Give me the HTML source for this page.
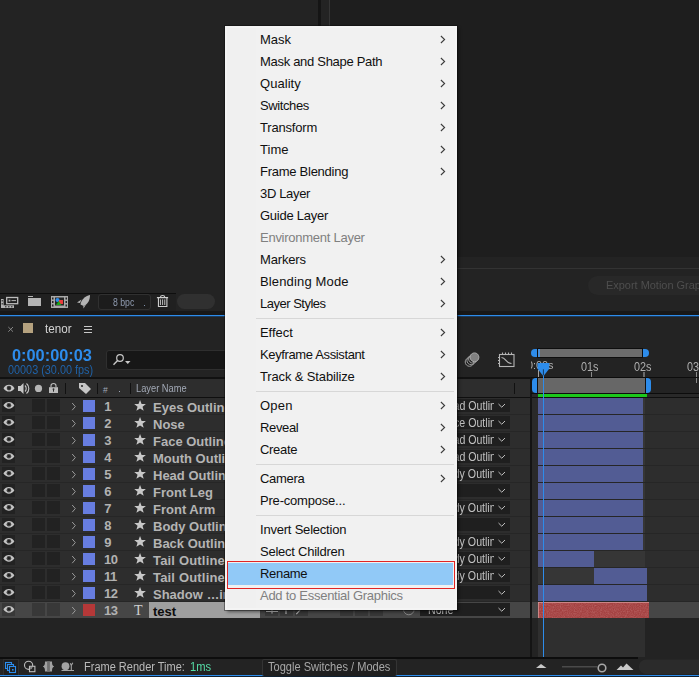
<!DOCTYPE html>
<html><head><meta charset="utf-8"><title>AE</title>
<style>
*{box-sizing:border-box;margin:0;padding:0}
html,body{width:699px;height:679px;overflow:hidden;background:#232323;font-family:"Liberation Sans",sans-serif;}
body{position:relative}
.a{position:absolute}
.t{position:absolute;white-space:nowrap;line-height:1}
/* menu */
#menu{position:absolute;left:225px;top:26px;width:232px;height:584px;background:#f1f1f1;border:2px solid #f4f4f4;box-shadow:0 0 0 1px rgba(10,10,10,.4),2px 2px 3px rgba(0,0,0,.45)}
#menu .gut{position:absolute;left:0;top:0;width:29px;height:100%;background:#f0f0f0}
.mi{position:absolute;left:1px;width:225px;height:22px;font-size:13px;line-height:24px;color:#101010;letter-spacing:-0.36px;padding-left:32px;white-space:nowrap}
.mi.dis{color:#808080}
.hlbg{position:absolute;left:1px;width:225px;height:22px;background:#91c9f7}
.mi svg{position:absolute;left:212px;top:7px}
.sep{position:absolute;left:29px;width:198px;height:1px;background:#d7d7d7}
/* rows */
.row{position:absolute;left:0;width:699px;height:17px;background:#2d2d2d;border-bottom:1px solid #262626}
.row.sel{background:#464646;border-bottom-color:#464646;height:16px}
.bx{position:absolute;top:1px;height:13px;background:#222}
.sel .bx{background:#383838}
.num{position:absolute;top:2px;font-size:13px;font-weight:bold;color:#b2b2b2;line-height:13px;letter-spacing:-0.6px}
.nm{position:absolute;left:153px;top:3px;font-size:13px;font-weight:bold;color:#b4b4b4;line-height:13px;white-space:nowrap}
.dd{position:absolute;left:420px;top:1px;width:90px;height:13px;background:#1f1f1f}
.dd .cl{position:absolute;left:0;top:0;width:74.2px;height:15px;overflow:hidden}
.dd span{position:absolute;right:-1.5px;top:0.8px;font-size:12.5px;line-height:13px;color:#c2c2c2;white-space:nowrap;transform:scaleX(0.85);transform-origin:100% 0}
.dd svg{position:absolute;left:78px;top:4px}
</style></head><body>

<div class="a" style="left:330px;top:0;width:369px;height:257px;background:#1e1e1e"></div>
<div class="a" style="left:318px;top:0;width:3px;height:311px;background:#151515"></div>
<div class="a" style="left:329px;top:0;width:1px;height:311px;background:#353535"></div>
<div class="a" style="left:330px;top:268px;width:369px;height:1px;background:#333"></div>
<div class="a" style="left:588px;top:276px;width:140px;height:19px;border-radius:10px;background:#282828"></div>
<div class="t" style="left:606px;top:280.3px;font-size:11.5px;color:#4e4e4e;transform:scaleX(0.951);transform-origin:0 0;">Export Motion Graphics Template</div>
<div class="a" style="left:0;top:294px;width:176px;height:17px;background:#202020"></div>
<div class="a" style="left:0;top:293px;width:176px;height:1px;background:#0e0e0e"></div>
<div class="a" style="left:0;top:311px;width:699px;height:4px;background:#181818"></div>
<div class="a" style="left:0;top:315px;width:699px;height:1px;background:#2d8ceb"></div>
<div class="a" style="left:0;top:316px;width:699px;height:1px;background:#1c3a5a"></div>
<svg class="a" style="left:0;top:294px" width="220" height="17" viewBox="0 294 220 17">
<g fill="#b4b4b4">
<rect x="1" y="299" width="2.6" height="9"/><rect x="3" y="305.3" width="11" height="2.7"/>
<rect x="6.700" y="297.500" width="11" height="6.200" fill="none" stroke="#bcbcbc" stroke-width="1.300"/>
<rect x="8.600" y="299.700" width="1.800" height="1.800"/><rect x="11.500" y="300.100" width="4.500" height="1"/>
<g fill="#202020"><rect x="1.700" y="300" width="1" height="1.500"/><rect x="1.700" y="303" width="1" height="1.500"/><rect x="5" y="306.300" width="1.500" height="1"/><rect x="8" y="306.300" width="1.500" height="1"/><rect x="11" y="306.300" width="1.500" height="1"/></g>
<rect x="28" y="296" width="5" height="1"/><rect x="28" y="298" width="13" height="8"/>
</g>
<g>
<rect x="51" y="296" width="17" height="12" fill="#a9a9a9"/>
<rect x="55" y="297.5" width="9" height="8" fill="#252525"/>
<circle cx="57.5" cy="300" r="2" fill="#2d8ceb"/><rect x="59" y="300" width="4" height="4" fill="#e83c3c"/><path d="M56 305 L58.7 301 L61.4 305Z" fill="#18a818"/>
<g fill="#252525"><rect x="52" y="297.5" width="1.5" height="2"/><rect x="52" y="301" width="1.5" height="2"/><rect x="52" y="304.5" width="1.5" height="2"/><rect x="65.5" y="297.5" width="1.5" height="2"/><rect x="65.5" y="301" width="1.5" height="2"/><rect x="65.5" y="304.5" width="1.5" height="2"/></g>
</g>
<g fill="#b4b4b4">
<path d="M90 295 C85 296 81 300 80.5 304.5 L83.5 306 C88 304 90 300 90 295Z"/>
<path d="M81.5 299.5 L77 302.5 L80 303Z"/>
<path d="M86 304.5 L83.5 308.5 L83.3 306.3Z"/>
</g>
<rect x="98.5" y="294.5" width="52" height="15" rx="2.5" fill="#1c1c1c" stroke="#303030"/>
<rect x="144" y="305" width="1" height="1" fill="#7d8ea8"/>
<g fill="none" stroke="#cdcdcd" stroke-width="1.100">
<path d="M156.900 297.600 H168.100 M160.400 297.200 C160.600 294.900 164.600 294.900 164.800 297.200 M158.450 298 V306.450 H166.900 V298"/>
<path d="M160.450 299.400 V305 M162.600 299.400 V305 M164.750 299.400 V305" stroke-width="0.9"/>
</g>
<rect x="177" y="294" width="38" height="15" rx="7.5" fill="#303030"/>
</svg>
<div class="t" style="left:113px;top:297px;font-size:11px;color:#8f9bb0;transform:scaleX(0.79);transform-origin:0 0;">8 bpc</div>
<svg class="a" style="left:0;top:320px" width="100" height="18" viewBox="0 320 100 18">
<path d="M8.3 327 L13 331.700 M13 327 L8.3 331.700" stroke="#909090" stroke-width="0.9" fill="none"/>
<rect x="23" y="323" width="10" height="10" fill="#b5a27f"/>
<g fill="#c8c8c8"><rect x="84" y="326" width="8" height="1"/><rect x="84" y="329" width="8" height="1"/><rect x="84" y="332" width="8" height="1"/></g>
</svg>
<div class="t" style="left:45px;top:322.5px;font-size:12.5px;color:#d4d4d4;transform:scaleX(0.93);transform-origin:0 0;">tenor</div>
<div class="t" style="left:12px;top:346.5px;font-size:16.5px;color:#2d8ceb;transform:scaleX(0.99);transform-origin:0 0;font-weight:bold">0:00:00:03</div>
<div class="t" style="left:8px;top:364px;font-size:12px;color:#1f62a8;transform:scaleX(0.905);transform-origin:0 0;">00003 (30.00 fps)</div>
<div class="a" style="left:106px;top:350px;width:200px;height:20px;border:1px solid #2f2f2f;border-radius:3px;background:#171717"></div>
<svg class="a" style="left:110px;top:352px" width="24" height="16" viewBox="110 352 24 16">
<circle cx="120" cy="358" r="3.3" fill="none" stroke="#c8c8c8" stroke-width="1.2"/><path d="M117.6 360.6 L113.5 364.8" stroke="#c8c8c8" stroke-width="1.4"/>
<path d="M125 361 H130.5 L127.75 364Z" fill="#c8c8c8"/></svg>
<svg class="a" style="left:460px;top:348px" width="60" height="24" viewBox="460 348 60 24">
<g fill="none" stroke="#9a9a9a" stroke-width="1">
<circle cx="469.5" cy="362" r="4.3"/><circle cx="471.2" cy="360.4" r="4.3"/><circle cx="472.9" cy="358.8" r="4.3"/>
</g><circle cx="474.5" cy="357.3" r="4.4" fill="#808080" stroke="#a8a8a8" stroke-width="1"/>
<g fill="none" stroke="#b4b4b4" stroke-width="1.1">
<rect x="499.5" y="354.5" width="14.5" height="12"/>
<path d="M501.5 357.5 C506 357.5 506 363.5 511.5 363.5"/>
<path d="M502.5 352.5 V354 M505.5 352.5 V354 M508.5 352.5 V354 M511.5 352.5 V354 M498 357.5 H499.5 M498 360.5 H499.5 M498 363.5 H499.5"/>
</g></svg>
<div class="a" style="left:0;top:377px;width:531px;height:2px;background:#111"></div>
<div class="a" style="left:0;top:379px;width:530px;height:18px;background:#2d2d2d"></div>
<div class="a" style="left:0;top:397px;width:699px;height:1px;background:#0f0f0f"></div>
<svg class="a" style="left:0;top:379px" width="530" height="18" viewBox="0 379 530 18">
<g fill="#c6c6c6">
<path d="M3.500 388.200 C6 383.700 12 383.700 14.500 388.200 C12 392.700 6 392.700 3.500 388.200Z"/>
</g><circle cx="9" cy="388.100" r="2.300" fill="#3a3a3a"/><circle cx="9" cy="388.100" r="1.100" fill="#222"/>
<g fill="#c6c6c6">
<path d="M18 386 H20.5 L23.5 383 V394 L20.5 391 H18Z"/>
</g>
<path d="M25 385.5 C26.6 387 26.6 390 25 391.5 M26.5 383.5 C29.6 386 29.6 391 26.5 393.5" stroke="#c6c6c6" fill="none" stroke-width="1.1"/>
<circle cx="38.500" cy="388.400" r="3.600" fill="#b6b6b6"/>
<rect x="49" y="387.200" width="9" height="5.800" fill="#bcbcbc"/><path d="M51 387.200 V385.700 C51 382.700 56 382.700 56 385.700 V387.200" fill="none" stroke="#bcbcbc" stroke-width="1.100"/><rect x="53" y="389" width="1" height="2.700" fill="#2d2d2d"/><circle cx="53.500" cy="389.200" r="0.900" fill="#2d2d2d"/>
<rect x="65" y="383" width="1" height="11" fill="#111"/>
<path d="M79 383 H85 L91 389 L86 394 L79 388Z" fill="#c6c6c6"/><circle cx="82" cy="386" r="1.1" fill="#2d2d2d"/>
<rect x="97" y="383" width="1" height="11" fill="#111"/>
<rect x="130" y="383" width="1" height="11" fill="#111"/>
<rect x="514" y="383" width="1" height="11" fill="#111"/>
<rect x="119" y="391" width="1" height="1" fill="#a0a8b8"/>
</svg>
<div class="t" style="left:103px;top:385.5px;font-size:8.5px;color:#a0a8b8;transform:scaleX(1.0);transform-origin:0 0;">#</div>
<div class="t" style="left:136px;top:384.4px;font-size:10px;color:#a2a9b6;transform:scaleX(0.93);transform-origin:0 0;">Layer Name</div>
<div class="a" style="left:530px;top:378px;width:1.5px;height:280px;background:#141414"></div>
<div class="a" style="left:537px;top:348px;width:106px;height:10px;background:#0e0e0e"></div>
<div class="a" style="left:538px;top:349px;width:104px;height:8px;background:#6c6c6c"></div>
<div class="a" style="left:538px;top:349px;width:1.7px;height:8px;background:#4a8fd8"></div>
<div class="a" style="left:531px;top:349px;width:6px;height:8px;background:#2d8ceb;border-radius:4px 0 0 4px"></div>
<div class="a" style="left:643px;top:349px;width:6px;height:8px;background:#2d8ceb;border-radius:0 4px 4px 0"></div>
<div class="a" style="left:531px;top:358px;width:40px;height:16px;overflow:hidden"><div class="t" style="left:-4.300px;top:1.900px;font-size:11.5px;color:#b0b0b0;transform:scaleX(0.94);transform-origin:0 0">0:00s</div></div>
<div class="t" style="left:580.5px;top:360.5px;font-size:12px;color:#b0b0b0;transform:scaleX(0.9);transform-origin:0 0;">01s</div>
<div class="t" style="left:633.5px;top:360.5px;font-size:12px;color:#b0b0b0;transform:scaleX(0.9);transform-origin:0 0;">02s</div>
<div class="t" style="left:686.5px;top:360.5px;font-size:12px;color:#b0b0b0;transform:scaleX(0.9);transform-origin:0 0;">03s</div>
<div class="a" style="left:538px;top:370px;width:1px;height:7px;background:#a4a4a4"></div>
<div class="a" style="left:591px;top:372px;width:1px;height:5px;background:#8a8a8a"></div>
<div class="a" style="left:643px;top:372px;width:2px;height:5px;background:#6a6a6a"></div>
<div class="a" style="left:696px;top:372px;width:1px;height:11px;background:#8a8a8a"></div>
<div class="a" style="left:531px;top:377px;width:168px;height:1px;background:#0c0c0c"></div>
<div class="a" style="left:538.3px;top:378px;width:106.8px;height:15px;background:#676767"></div>
<div class="a" style="left:537px;top:378px;width:1.300px;height:15px;background:#111"></div>
<div class="a" style="left:645.100px;top:378px;width:1px;height:15px;background:#111"></div>
<div class="a" style="left:532px;top:378px;width:5.200px;height:15px;background:#2d8ceb;border-radius:4px 0 0 4px"></div>
<div class="a" style="left:646px;top:378px;width:4.800px;height:15px;background:#2d8ceb;border-radius:0 4px 4px 0"></div>
<div class="a" style="left:531px;top:393px;width:168px;height:1px;background:#0c0c0c"></div>
<div class="a" style="left:531.5px;top:394px;width:168px;height:3px;background:#292929"></div>
<div class="a" style="left:538px;top:394px;width:109px;height:3px;background:#1cc81c"></div>
<div class="row" style="top:398px">
<div class="bx" style="left:2px;width:13px"></div><div class="bx" style="left:32px;width:13px"></div><div class="bx" style="left:47px;width:13px"></div>
<svg class="a" style="left:3px;top:3px" width="12" height="9" viewBox="0 0 12 9"><path d="M0.400 4.300 C2.800 -0.200 9 -0.200 11.400 4.300 C9 8.800 2.800 8.800 0.400 4.300Z" fill="#c4c4c4"/><circle cx="5.900" cy="4.200" r="2.300" fill="#404040"/><circle cx="5.900" cy="4.200" r="1.100" fill="#1e1e1e"/></svg><svg class="a" style="left:71px;top:4px" width="6" height="9" viewBox="0 0 6 9"><path d="M1.200 1 L4.300 4.600 L1.200 8.200" fill="none" stroke="#9a9a9a" stroke-width="1"/></svg>
<div class="a" style="left:83px;top:2px;width:12px;height:12px;background:#677de0"></div>
<div class="num" style="left:104.3px">1</div>
<svg class="a" style="left:133.600px;top:2.300px" width="12.500" height="11.500" viewBox="0 0 12 11"><path d="M5.8 0 L7.3 3.7 L11.4 3.9 L8.2 6.4 L9.3 10.3 L5.8 8.1 L2.3 10.3 L3.4 6.4 L0.2 3.9 L4.3 3.7Z" fill="#c8c8c8"/></svg>
<div class="nm">Eyes Outline</div>
<div class="dd"><div class="cl"><span>Head Outlin</span></div><svg width="8" height="5" viewBox="0 0 8 5"><path d="M0.5 1 L3.75 4.2 L7 1" fill="none" stroke="#c0c0c0" stroke-width="1"/></svg></div>
<div class="a" style="left:530px;top:0;width:1.5px;height:17px;background:#141414"></div>
<div class="a" style="left:538px;top:0;width:107px;height:16px;background:#363636"></div>
<div class="a" style="left:538px;top:0;width:105px;height:16px;background:#525c94"></div>
</div>
<div class="row" style="top:415px">
<div class="bx" style="left:2px;width:13px"></div><div class="bx" style="left:32px;width:13px"></div><div class="bx" style="left:47px;width:13px"></div>
<svg class="a" style="left:3px;top:3px" width="12" height="9" viewBox="0 0 12 9"><path d="M0.400 4.300 C2.800 -0.200 9 -0.200 11.400 4.300 C9 8.800 2.800 8.800 0.400 4.300Z" fill="#c4c4c4"/><circle cx="5.900" cy="4.200" r="2.300" fill="#404040"/><circle cx="5.900" cy="4.200" r="1.100" fill="#1e1e1e"/></svg><svg class="a" style="left:71px;top:4px" width="6" height="9" viewBox="0 0 6 9"><path d="M1.200 1 L4.300 4.600 L1.200 8.200" fill="none" stroke="#9a9a9a" stroke-width="1"/></svg>
<div class="a" style="left:83px;top:2px;width:12px;height:12px;background:#677de0"></div>
<div class="num" style="left:104.3px">2</div>
<svg class="a" style="left:133.600px;top:2.300px" width="12.500" height="11.500" viewBox="0 0 12 11"><path d="M5.8 0 L7.3 3.7 L11.4 3.9 L8.2 6.4 L9.3 10.3 L5.8 8.1 L2.3 10.3 L3.4 6.4 L0.2 3.9 L4.3 3.7Z" fill="#c8c8c8"/></svg>
<div class="nm">Nose</div>
<div class="dd"><div class="cl"><span>Face Outlin</span></div><svg width="8" height="5" viewBox="0 0 8 5"><path d="M0.5 1 L3.75 4.2 L7 1" fill="none" stroke="#c0c0c0" stroke-width="1"/></svg></div>
<div class="a" style="left:530px;top:0;width:1.5px;height:17px;background:#141414"></div>
<div class="a" style="left:538px;top:0;width:107px;height:16px;background:#363636"></div>
<div class="a" style="left:538px;top:0;width:105px;height:16px;background:#525c94"></div>
</div>
<div class="row" style="top:432px">
<div class="bx" style="left:2px;width:13px"></div><div class="bx" style="left:32px;width:13px"></div><div class="bx" style="left:47px;width:13px"></div>
<svg class="a" style="left:3px;top:3px" width="12" height="9" viewBox="0 0 12 9"><path d="M0.400 4.300 C2.800 -0.200 9 -0.200 11.400 4.300 C9 8.800 2.800 8.800 0.400 4.300Z" fill="#c4c4c4"/><circle cx="5.900" cy="4.200" r="2.300" fill="#404040"/><circle cx="5.900" cy="4.200" r="1.100" fill="#1e1e1e"/></svg><svg class="a" style="left:71px;top:4px" width="6" height="9" viewBox="0 0 6 9"><path d="M1.200 1 L4.300 4.600 L1.200 8.200" fill="none" stroke="#9a9a9a" stroke-width="1"/></svg>
<div class="a" style="left:83px;top:2px;width:12px;height:12px;background:#677de0"></div>
<div class="num" style="left:104.3px">3</div>
<svg class="a" style="left:133.600px;top:2.300px" width="12.500" height="11.500" viewBox="0 0 12 11"><path d="M5.8 0 L7.3 3.7 L11.4 3.9 L8.2 6.4 L9.3 10.3 L5.8 8.1 L2.3 10.3 L3.4 6.4 L0.2 3.9 L4.3 3.7Z" fill="#c8c8c8"/></svg>
<div class="nm">Face Outline</div>
<div class="dd"><div class="cl"><span>Head Outlin</span></div><svg width="8" height="5" viewBox="0 0 8 5"><path d="M0.5 1 L3.75 4.2 L7 1" fill="none" stroke="#c0c0c0" stroke-width="1"/></svg></div>
<div class="a" style="left:530px;top:0;width:1.5px;height:17px;background:#141414"></div>
<div class="a" style="left:538px;top:0;width:107px;height:16px;background:#363636"></div>
<div class="a" style="left:538px;top:0;width:105px;height:16px;background:#525c94"></div>
</div>
<div class="row" style="top:449px">
<div class="bx" style="left:2px;width:13px"></div><div class="bx" style="left:32px;width:13px"></div><div class="bx" style="left:47px;width:13px"></div>
<svg class="a" style="left:3px;top:3px" width="12" height="9" viewBox="0 0 12 9"><path d="M0.400 4.300 C2.800 -0.200 9 -0.200 11.400 4.300 C9 8.800 2.800 8.800 0.400 4.300Z" fill="#c4c4c4"/><circle cx="5.900" cy="4.200" r="2.300" fill="#404040"/><circle cx="5.900" cy="4.200" r="1.100" fill="#1e1e1e"/></svg><svg class="a" style="left:71px;top:4px" width="6" height="9" viewBox="0 0 6 9"><path d="M1.200 1 L4.300 4.600 L1.200 8.200" fill="none" stroke="#9a9a9a" stroke-width="1"/></svg>
<div class="a" style="left:83px;top:2px;width:12px;height:12px;background:#677de0"></div>
<div class="num" style="left:104.3px">4</div>
<svg class="a" style="left:133.600px;top:2.300px" width="12.500" height="11.500" viewBox="0 0 12 11"><path d="M5.8 0 L7.3 3.7 L11.4 3.9 L8.2 6.4 L9.3 10.3 L5.8 8.1 L2.3 10.3 L3.4 6.4 L0.2 3.9 L4.3 3.7Z" fill="#c8c8c8"/></svg>
<div class="nm">Mouth Outline</div>
<div class="dd"><div class="cl"><span>Head Outlin</span></div><svg width="8" height="5" viewBox="0 0 8 5"><path d="M0.5 1 L3.75 4.2 L7 1" fill="none" stroke="#c0c0c0" stroke-width="1"/></svg></div>
<div class="a" style="left:530px;top:0;width:1.5px;height:17px;background:#141414"></div>
<div class="a" style="left:538px;top:0;width:107px;height:16px;background:#363636"></div>
<div class="a" style="left:538px;top:0;width:105px;height:16px;background:#525c94"></div>
</div>
<div class="row" style="top:466px">
<div class="bx" style="left:2px;width:13px"></div><div class="bx" style="left:32px;width:13px"></div><div class="bx" style="left:47px;width:13px"></div>
<svg class="a" style="left:3px;top:3px" width="12" height="9" viewBox="0 0 12 9"><path d="M0.400 4.300 C2.800 -0.200 9 -0.200 11.400 4.300 C9 8.800 2.800 8.800 0.400 4.300Z" fill="#c4c4c4"/><circle cx="5.900" cy="4.200" r="2.300" fill="#404040"/><circle cx="5.900" cy="4.200" r="1.100" fill="#1e1e1e"/></svg><svg class="a" style="left:71px;top:4px" width="6" height="9" viewBox="0 0 6 9"><path d="M1.200 1 L4.300 4.600 L1.200 8.200" fill="none" stroke="#9a9a9a" stroke-width="1"/></svg>
<div class="a" style="left:83px;top:2px;width:12px;height:12px;background:#677de0"></div>
<div class="num" style="left:104.3px">5</div>
<svg class="a" style="left:133.600px;top:2.300px" width="12.500" height="11.500" viewBox="0 0 12 11"><path d="M5.8 0 L7.3 3.7 L11.4 3.9 L8.2 6.4 L9.3 10.3 L5.8 8.1 L2.3 10.3 L3.4 6.4 L0.2 3.9 L4.3 3.7Z" fill="#c8c8c8"/></svg>
<div class="nm">Head Outline</div>
<div class="dd"><div class="cl"><span>Body Outlin</span></div><svg width="8" height="5" viewBox="0 0 8 5"><path d="M0.5 1 L3.75 4.2 L7 1" fill="none" stroke="#c0c0c0" stroke-width="1"/></svg></div>
<div class="a" style="left:530px;top:0;width:1.5px;height:17px;background:#141414"></div>
<div class="a" style="left:538px;top:0;width:107px;height:16px;background:#363636"></div>
<div class="a" style="left:538px;top:0;width:105px;height:16px;background:#525c94"></div>
</div>
<div class="row" style="top:483px">
<div class="bx" style="left:2px;width:13px"></div><div class="bx" style="left:32px;width:13px"></div><div class="bx" style="left:47px;width:13px"></div>
<svg class="a" style="left:3px;top:3px" width="12" height="9" viewBox="0 0 12 9"><path d="M0.400 4.300 C2.800 -0.200 9 -0.200 11.400 4.300 C9 8.800 2.800 8.800 0.400 4.300Z" fill="#c4c4c4"/><circle cx="5.900" cy="4.200" r="2.300" fill="#404040"/><circle cx="5.900" cy="4.200" r="1.100" fill="#1e1e1e"/></svg><svg class="a" style="left:71px;top:4px" width="6" height="9" viewBox="0 0 6 9"><path d="M1.200 1 L4.300 4.600 L1.200 8.200" fill="none" stroke="#9a9a9a" stroke-width="1"/></svg>
<div class="a" style="left:83px;top:2px;width:12px;height:12px;background:#677de0"></div>
<div class="num" style="left:104.3px">6</div>
<svg class="a" style="left:133.600px;top:2.300px" width="12.500" height="11.500" viewBox="0 0 12 11"><path d="M5.8 0 L7.3 3.7 L11.4 3.9 L8.2 6.4 L9.3 10.3 L5.8 8.1 L2.3 10.3 L3.4 6.4 L0.2 3.9 L4.3 3.7Z" fill="#c8c8c8"/></svg>
<div class="nm">Front Leg</div>
<div class="dd"><div class="cl"><span></span></div><svg width="8" height="5" viewBox="0 0 8 5"><path d="M0.5 1 L3.75 4.2 L7 1" fill="none" stroke="#c0c0c0" stroke-width="1"/></svg></div>
<div class="a" style="left:530px;top:0;width:1.5px;height:17px;background:#141414"></div>
<div class="a" style="left:538px;top:0;width:107px;height:16px;background:#363636"></div>
<div class="a" style="left:538px;top:0;width:105px;height:16px;background:#525c94"></div>
</div>
<div class="row" style="top:500px">
<div class="bx" style="left:2px;width:13px"></div><div class="bx" style="left:32px;width:13px"></div><div class="bx" style="left:47px;width:13px"></div>
<svg class="a" style="left:3px;top:3px" width="12" height="9" viewBox="0 0 12 9"><path d="M0.400 4.300 C2.800 -0.200 9 -0.200 11.400 4.300 C9 8.800 2.800 8.800 0.400 4.300Z" fill="#c4c4c4"/><circle cx="5.900" cy="4.200" r="2.300" fill="#404040"/><circle cx="5.900" cy="4.200" r="1.100" fill="#1e1e1e"/></svg><svg class="a" style="left:71px;top:4px" width="6" height="9" viewBox="0 0 6 9"><path d="M1.200 1 L4.300 4.600 L1.200 8.200" fill="none" stroke="#9a9a9a" stroke-width="1"/></svg>
<div class="a" style="left:83px;top:2px;width:12px;height:12px;background:#677de0"></div>
<div class="num" style="left:104.3px">7</div>
<svg class="a" style="left:133.600px;top:2.300px" width="12.500" height="11.500" viewBox="0 0 12 11"><path d="M5.8 0 L7.3 3.7 L11.4 3.9 L8.2 6.4 L9.3 10.3 L5.8 8.1 L2.3 10.3 L3.4 6.4 L0.2 3.9 L4.3 3.7Z" fill="#c8c8c8"/></svg>
<div class="nm">Front Arm</div>
<div class="dd"><div class="cl"><span>Body Outlin</span></div><svg width="8" height="5" viewBox="0 0 8 5"><path d="M0.5 1 L3.75 4.2 L7 1" fill="none" stroke="#c0c0c0" stroke-width="1"/></svg></div>
<div class="a" style="left:530px;top:0;width:1.5px;height:17px;background:#141414"></div>
<div class="a" style="left:538px;top:0;width:107px;height:16px;background:#363636"></div>
<div class="a" style="left:538px;top:0;width:105px;height:16px;background:#525c94"></div>
</div>
<div class="row" style="top:517px">
<div class="bx" style="left:2px;width:13px"></div><div class="bx" style="left:32px;width:13px"></div><div class="bx" style="left:47px;width:13px"></div>
<svg class="a" style="left:3px;top:3px" width="12" height="9" viewBox="0 0 12 9"><path d="M0.400 4.300 C2.800 -0.200 9 -0.200 11.400 4.300 C9 8.800 2.800 8.800 0.400 4.300Z" fill="#c4c4c4"/><circle cx="5.900" cy="4.200" r="2.300" fill="#404040"/><circle cx="5.900" cy="4.200" r="1.100" fill="#1e1e1e"/></svg><svg class="a" style="left:71px;top:4px" width="6" height="9" viewBox="0 0 6 9"><path d="M1.200 1 L4.300 4.600 L1.200 8.200" fill="none" stroke="#9a9a9a" stroke-width="1"/></svg>
<div class="a" style="left:83px;top:2px;width:12px;height:12px;background:#677de0"></div>
<div class="num" style="left:104.3px">8</div>
<svg class="a" style="left:133.600px;top:2.300px" width="12.500" height="11.500" viewBox="0 0 12 11"><path d="M5.8 0 L7.3 3.7 L11.4 3.9 L8.2 6.4 L9.3 10.3 L5.8 8.1 L2.3 10.3 L3.4 6.4 L0.2 3.9 L4.3 3.7Z" fill="#c8c8c8"/></svg>
<div class="nm">Body Outline</div>
<div class="dd"><div class="cl"><span></span></div><svg width="8" height="5" viewBox="0 0 8 5"><path d="M0.5 1 L3.75 4.2 L7 1" fill="none" stroke="#c0c0c0" stroke-width="1"/></svg></div>
<div class="a" style="left:530px;top:0;width:1.5px;height:17px;background:#141414"></div>
<div class="a" style="left:538px;top:0;width:107px;height:16px;background:#363636"></div>
<div class="a" style="left:538px;top:0;width:105px;height:16px;background:#525c94"></div>
</div>
<div class="row" style="top:534px">
<div class="bx" style="left:2px;width:13px"></div><div class="bx" style="left:32px;width:13px"></div><div class="bx" style="left:47px;width:13px"></div>
<svg class="a" style="left:3px;top:3px" width="12" height="9" viewBox="0 0 12 9"><path d="M0.400 4.300 C2.800 -0.200 9 -0.200 11.400 4.300 C9 8.800 2.800 8.800 0.400 4.300Z" fill="#c4c4c4"/><circle cx="5.900" cy="4.200" r="2.300" fill="#404040"/><circle cx="5.900" cy="4.200" r="1.100" fill="#1e1e1e"/></svg><svg class="a" style="left:71px;top:4px" width="6" height="9" viewBox="0 0 6 9"><path d="M1.200 1 L4.300 4.600 L1.200 8.200" fill="none" stroke="#9a9a9a" stroke-width="1"/></svg>
<div class="a" style="left:83px;top:2px;width:12px;height:12px;background:#677de0"></div>
<div class="num" style="left:104.3px">9</div>
<svg class="a" style="left:133.600px;top:2.300px" width="12.500" height="11.500" viewBox="0 0 12 11"><path d="M5.8 0 L7.3 3.7 L11.4 3.9 L8.2 6.4 L9.3 10.3 L5.8 8.1 L2.3 10.3 L3.4 6.4 L0.2 3.9 L4.3 3.7Z" fill="#c8c8c8"/></svg>
<div class="nm">Back Outline</div>
<div class="dd"><div class="cl"><span>Body Outlin</span></div><svg width="8" height="5" viewBox="0 0 8 5"><path d="M0.5 1 L3.75 4.2 L7 1" fill="none" stroke="#c0c0c0" stroke-width="1"/></svg></div>
<div class="a" style="left:530px;top:0;width:1.5px;height:17px;background:#141414"></div>
<div class="a" style="left:538px;top:0;width:107px;height:16px;background:#363636"></div>
<div class="a" style="left:538px;top:0;width:105px;height:16px;background:#525c94"></div>
</div>
<div class="row" style="top:551px">
<div class="bx" style="left:2px;width:13px"></div><div class="bx" style="left:32px;width:13px"></div><div class="bx" style="left:47px;width:13px"></div>
<svg class="a" style="left:3px;top:3px" width="12" height="9" viewBox="0 0 12 9"><path d="M0.400 4.300 C2.800 -0.200 9 -0.200 11.400 4.300 C9 8.800 2.800 8.800 0.400 4.300Z" fill="#c4c4c4"/><circle cx="5.900" cy="4.200" r="2.300" fill="#404040"/><circle cx="5.900" cy="4.200" r="1.100" fill="#1e1e1e"/></svg><svg class="a" style="left:71px;top:4px" width="6" height="9" viewBox="0 0 6 9"><path d="M1.200 1 L4.300 4.600 L1.200 8.200" fill="none" stroke="#9a9a9a" stroke-width="1"/></svg>
<div class="a" style="left:83px;top:2px;width:12px;height:12px;background:#677de0"></div>
<div class="num" style="left:104px">10</div>
<svg class="a" style="left:133.600px;top:2.300px" width="12.500" height="11.500" viewBox="0 0 12 11"><path d="M5.8 0 L7.3 3.7 L11.4 3.9 L8.2 6.4 L9.3 10.3 L5.8 8.1 L2.3 10.3 L3.4 6.4 L0.2 3.9 L4.3 3.7Z" fill="#c8c8c8"/></svg>
<div class="nm"><span style="letter-spacing:0.18px">Tail Outline</span></div>
<div class="dd"><div class="cl"><span>Body Outlin</span></div><svg width="8" height="5" viewBox="0 0 8 5"><path d="M0.5 1 L3.75 4.2 L7 1" fill="none" stroke="#c0c0c0" stroke-width="1"/></svg></div>
<div class="a" style="left:530px;top:0;width:1.5px;height:17px;background:#141414"></div>
<div class="a" style="left:538px;top:0;width:107px;height:16px;background:#363636"></div>
<div class="a" style="left:538px;top:0;width:56px;height:16px;background:#525c94"></div>
</div>
<div class="row" style="top:568px">
<div class="bx" style="left:2px;width:13px"></div><div class="bx" style="left:32px;width:13px"></div><div class="bx" style="left:47px;width:13px"></div>
<svg class="a" style="left:3px;top:3px" width="12" height="9" viewBox="0 0 12 9"><path d="M0.400 4.300 C2.800 -0.200 9 -0.200 11.400 4.300 C9 8.800 2.800 8.800 0.400 4.300Z" fill="#c4c4c4"/><circle cx="5.900" cy="4.200" r="2.300" fill="#404040"/><circle cx="5.900" cy="4.200" r="1.100" fill="#1e1e1e"/></svg><svg class="a" style="left:71px;top:4px" width="6" height="9" viewBox="0 0 6 9"><path d="M1.200 1 L4.300 4.600 L1.200 8.200" fill="none" stroke="#9a9a9a" stroke-width="1"/></svg>
<div class="a" style="left:83px;top:2px;width:12px;height:12px;background:#677de0"></div>
<div class="num" style="left:104px">11</div>
<svg class="a" style="left:133.600px;top:2.300px" width="12.500" height="11.500" viewBox="0 0 12 11"><path d="M5.8 0 L7.3 3.7 L11.4 3.9 L8.2 6.4 L9.3 10.3 L5.8 8.1 L2.3 10.3 L3.4 6.4 L0.2 3.9 L4.3 3.7Z" fill="#c8c8c8"/></svg>
<div class="nm"><span style="letter-spacing:0.18px">Tail Outline</span></div>
<div class="dd"><div class="cl"><span>Body Outlin</span></div><svg width="8" height="5" viewBox="0 0 8 5"><path d="M0.5 1 L3.75 4.2 L7 1" fill="none" stroke="#c0c0c0" stroke-width="1"/></svg></div>
<div class="a" style="left:530px;top:0;width:1.5px;height:17px;background:#141414"></div>
<div class="a" style="left:538px;top:0;width:107px;height:16px;background:#363636"></div>
<div class="a" style="left:594px;top:0;width:53px;height:16px;background:#525c94"></div>
</div>
<div class="row" style="top:585px">
<div class="bx" style="left:2px;width:13px"></div><div class="bx" style="left:32px;width:13px"></div><div class="bx" style="left:47px;width:13px"></div>
<svg class="a" style="left:3px;top:3px" width="12" height="9" viewBox="0 0 12 9"><path d="M0.400 4.300 C2.800 -0.200 9 -0.200 11.400 4.300 C9 8.800 2.800 8.800 0.400 4.300Z" fill="#c4c4c4"/><circle cx="5.900" cy="4.200" r="2.300" fill="#404040"/><circle cx="5.900" cy="4.200" r="1.100" fill="#1e1e1e"/></svg><svg class="a" style="left:71px;top:4px" width="6" height="9" viewBox="0 0 6 9"><path d="M1.200 1 L4.300 4.600 L1.200 8.200" fill="none" stroke="#9a9a9a" stroke-width="1"/></svg>
<div class="a" style="left:83px;top:2px;width:12px;height:12px;background:#677de0"></div>
<div class="num" style="left:104px">12</div>
<svg class="a" style="left:133.600px;top:2.300px" width="12.500" height="11.500" viewBox="0 0 12 11"><path d="M5.8 0 L7.3 3.7 L11.4 3.9 L8.2 6.4 L9.3 10.3 L5.8 8.1 L2.3 10.3 L3.4 6.4 L0.2 3.9 L4.3 3.7Z" fill="#c8c8c8"/></svg>
<div class="nm">Shadow&nbsp;<span style="letter-spacing:0.35px;margin-left:0.8px">...</span>ine</div>
<div class="dd"><div class="cl"><span></span></div><svg width="8" height="5" viewBox="0 0 8 5"><path d="M0.5 1 L3.75 4.2 L7 1" fill="none" stroke="#c0c0c0" stroke-width="1"/></svg></div>
<div class="a" style="left:530px;top:0;width:1.5px;height:17px;background:#141414"></div>
<div class="a" style="left:538px;top:0;width:107px;height:16px;background:#363636"></div>
<div class="a" style="left:538px;top:0;width:109px;height:16px;background:#525c94"></div>
</div>
<div class="row sel" style="top:602px">
<div class="bx" style="left:2px;width:13px"></div><div class="bx" style="left:32px;width:13px"></div><div class="bx" style="left:47px;width:13px"></div>
<svg class="a" style="left:3px;top:3px" width="12" height="9" viewBox="0 0 12 9"><path d="M0.400 4.300 C2.800 -0.200 9 -0.200 11.400 4.300 C9 8.800 2.800 8.800 0.400 4.300Z" fill="#c4c4c4"/><circle cx="5.900" cy="4.200" r="2.300" fill="#404040"/><circle cx="5.900" cy="4.200" r="1.100" fill="#1e1e1e"/></svg><svg class="a" style="left:71px;top:4px" width="6" height="9" viewBox="0 0 6 9"><path d="M1.200 1 L4.300 4.600 L1.200 8.200" fill="none" stroke="#9a9a9a" stroke-width="1"/></svg>
<div class="a" style="left:83px;top:2px;width:12px;height:12px;background:#b53838"></div>
<div class="num" style="left:104px">13</div>
<div class="a" style="left:134px;top:1.500px;font-family:'Liberation Serif',serif;font-size:14px;line-height:14px;color:#d0d0d0">T</div>
<div class="a" style="left:149px;top:0;width:111px;height:16px;background:#9f9f9f"></div>
<div class="nm" style="color:#0c0c0c">test</div>
<div class="bx" style="left:264.5px;width:13px"></div>
<div class="bx" style="left:280px;width:13px"></div>
<div class="bx" style="left:294.5px;width:13px"></div>
<div class="bx" style="left:340px;width:13px"></div>
<div class="bx" style="left:355px;width:13px"></div>
<div class="bx" style="left:370px;width:13px"></div>
<svg class="a" style="left:402px;top:1px" width="14" height="14" viewBox="0 0 14 14"><circle cx="6.800" cy="6.500" r="5.300" fill="none" stroke="#8a8a8a" stroke-width="1"/><path d="M6.800 6.500 C8 4.500 9.500 4.500 10.500 6" fill="none" stroke="#8a8a8a" stroke-width="1"/></svg>
<svg class="a" style="left:264px;top:1px" width="46" height="14" viewBox="264 603 46 14"><g stroke="#b8b8b8" stroke-width="1.100" fill="none"><path d="M266 611.500 H278 M272 608 V613.500 M269.500 609.500 H274.500"/><path d="M286 607 V614 M283.500 609.500 L286 607 L288.500 609.500"/><path d="M296.300 614.200 L302 608"/></g></svg>
<div class="dd"><span style="right:auto;left:8px;transform-origin:0 0">None</span><svg width="8" height="5" viewBox="0 0 8 5"><path d="M0.5 1 L3.75 4.2 L7 1" fill="none" stroke="#c0c0c0" stroke-width="1"/></svg></div>
<div class="a" style="left:530px;top:0;width:1.5px;height:17px;background:#141414"></div>
<svg class="a" style="left:538px;top:0" width="111" height="16"><filter id="nz" x="0" y="0" width="100%" height="100%"><feTurbulence type="fractalNoise" baseFrequency="0.85" numOctaves="2" seed="3"/><feColorMatrix type="matrix" values="0 0 0 0 0.85  0 0 0 0 0.5  0 0 0 0 0.5  1.4 0 0 0 -0.45"/></filter><rect width="111" height="16" fill="#a44141"/><rect width="111" height="16" filter="url(#nz)" opacity="0.3"/><rect width="111" height="1" fill="#d79a9a" opacity="0.75"/><rect width="1" height="16" fill="#d79a9a" opacity="0.75"/></svg>
</div>
<div class="a" style="left:538px;top:618px;width:107px;height:39px;background:#2f2f2f"></div>
<div class="a" style="left:531.5px;top:398px;width:6.5px;height:204px;background:#2a2a2a"></div>
<div class="a" style="left:542.7px;top:370px;width:1.4px;height:287px;background:#2d8ceb"></div>
<svg class="a" style="left:537px;top:362px" width="14" height="15" viewBox="0 0 14 15"><path d="M0.600 1 H12.200 V6.800 L6.400 14.200 L0.600 6.800Z" fill="#2d8ceb"/><rect x="5.900" y="7.300" width="1" height="6" fill="#173a5e"/></svg>
<div class="a" style="left:0;top:657px;width:638px;height:2px;background:#0d0d0d"></div>
<div class="a" style="left:0;top:659px;width:699px;height:16px;background:#232323"></div>
<div class="a" style="left:0;top:675px;width:699px;height:1px;background:#2d8ceb"></div>
<div class="a" style="left:0;top:676px;width:699px;height:1px;background:#10202f"></div>
<div class="a" style="left:0;top:677px;width:699px;height:2px;background:#fff"></div>
<div class="a" style="left:3px;top:659px;width:16px;height:16px;background:#1e1e1e;border:1px solid #2f2f2f;border-bottom:none"></div>
<svg class="a" style="left:0;top:659px" width="80" height="16" viewBox="0 659 80 16">
<g fill="#232323" stroke="#2d8ceb" stroke-width="1.1">
<rect x="5.5" y="662.5" width="6" height="6" fill="none"/><rect x="7.5" y="664.5" width="6" height="6" fill="#1e1e1e"/><rect x="9.5" y="666.5" width="6" height="6" fill="#1e1e1e"/>
</g><rect x="12" y="669" width="1.6" height="1.6" fill="#2d8ceb"/>
<circle cx="28.600" cy="665.300" r="4.100" fill="none" stroke="#bdbdbd" stroke-width="1.100"/><rect x="29.500" y="666.300" width="5.400" height="5.400" fill="#232323" stroke="#bdbdbd" stroke-width="1.100"/><path d="M30.100 666.900 H32.600 C32.600 668 31.500 669.300 30.100 669.400Z" fill="#8a8a8a"/>
<path d="M45 661.400 H52 C52 664.300 52.300 665.400 54.200 666.500 C52.300 667.600 52 668.700 52 671.600 H45 C45 668.700 44.700 667.600 42.800 666.500 C44.700 665.400 45 664.300 45 661.400Z" fill="#a2a2a2"/><rect x="47.100" y="661.400" width="2.800" height="10.200" fill="#707070"/>
<circle cx="65.500" cy="666.200" r="3.900" fill="#a4a4a4"/><path d="M61.500 670.500 H74 M71.300 670 V665.500 L72.800 662.800 M71.300 665.500 L70.300 663.300" stroke="#a4a4a4" stroke-width="1.100" fill="none"/>
</svg>
<div class="t" style="left:84px;top:660.5px;font-size:12px;color:#bababa;transform:scaleX(0.917);transform-origin:0 0;">Frame Render Time:</div>
<div class="t" style="left:190px;top:660.5px;font-size:12px;color:#55dca6;transform:scaleX(0.93);transform-origin:0 0;">1ms</div>
<div class="a" style="left:262px;top:659px;width:135px;height:17px;border:1px solid #343434;border-bottom:none;border-radius:2px;background:#1f1f1f"></div>
<div class="t" style="left:268px;top:660.5px;font-size:12px;color:#a8a8a8;transform:scaleX(0.922);transform-origin:0 0;">Toggle Switches / Modes</div>
<svg class="a" style="left:530px;top:659px" width="169" height="16" viewBox="530 659 169 16">
<path d="M536 668 L541 664 L546.500 668Z" fill="#c8c8c8"/>
<rect x="562" y="666" width="35" height="1.5" fill="#4a4a4a"/>
<circle cx="602" cy="668" r="3.8" fill="#232323" stroke="#a8a8a8" stroke-width="1.6"/>
<path d="M616.500 670 L621 665.500 L623 667.500 L626.500 663.500 L633.500 670Z" fill="#c8c8c8"/>
<rect x="639" y="659.500" width="80" height="14.500" rx="7" fill="#2b2b2b"/>
</svg>
<div id="menu"><div class="gut"></div>
<div class="mi" style="top:0px;letter-spacing:-0.02px">Mask<svg width="6" height="9" viewBox="0 0 6 9"><path d="M0.9 1 L4.6 4.5 L0.9 8" fill="none" stroke="#3c3c3c" stroke-width="1.1"/></svg></div>
<div class="mi" style="top:22px;letter-spacing:-0.3px">Mask and Shape Path<svg width="6" height="9" viewBox="0 0 6 9"><path d="M0.9 1 L4.6 4.5 L0.9 8" fill="none" stroke="#3c3c3c" stroke-width="1.1"/></svg></div>
<div class="mi" style="top:44px;letter-spacing:0.05px">Quality<svg width="6" height="9" viewBox="0 0 6 9"><path d="M0.9 1 L4.6 4.5 L0.9 8" fill="none" stroke="#3c3c3c" stroke-width="1.1"/></svg></div>
<div class="mi" style="top:66px;letter-spacing:-0.4px">Switches<svg width="6" height="9" viewBox="0 0 6 9"><path d="M0.9 1 L4.6 4.5 L0.9 8" fill="none" stroke="#3c3c3c" stroke-width="1.1"/></svg></div>
<div class="mi" style="top:88px;letter-spacing:-0.19px">Transform<svg width="6" height="9" viewBox="0 0 6 9"><path d="M0.9 1 L4.6 4.5 L0.9 8" fill="none" stroke="#3c3c3c" stroke-width="1.1"/></svg></div>
<div class="mi" style="top:110px;letter-spacing:0.05px">Time<svg width="6" height="9" viewBox="0 0 6 9"><path d="M0.9 1 L4.6 4.5 L0.9 8" fill="none" stroke="#3c3c3c" stroke-width="1.1"/></svg></div>
<div class="mi" style="top:132px;letter-spacing:-0.26px">Frame Blending<svg width="6" height="9" viewBox="0 0 6 9"><path d="M0.9 1 L4.6 4.5 L0.9 8" fill="none" stroke="#3c3c3c" stroke-width="1.1"/></svg></div>
<div class="mi" style="top:154px;letter-spacing:-0.34px">3D Layer</div>
<div class="mi" style="top:176px;letter-spacing:-0.26px">Guide Layer</div>
<div class="mi dis" style="top:198px;letter-spacing:-0.26px">Environment Layer</div>
<div class="mi" style="top:220px;letter-spacing:-0.15px">Markers<svg width="6" height="9" viewBox="0 0 6 9"><path d="M0.9 1 L4.6 4.5 L0.9 8" fill="none" stroke="#3c3c3c" stroke-width="1.1"/></svg></div>
<div class="mi" style="top:242px;letter-spacing:0.15px">Blending Mode<svg width="6" height="9" viewBox="0 0 6 9"><path d="M0.9 1 L4.6 4.5 L0.9 8" fill="none" stroke="#3c3c3c" stroke-width="1.1"/></svg></div>
<div class="mi" style="top:264px;letter-spacing:-0.5px">Layer Styles<svg width="6" height="9" viewBox="0 0 6 9"><path d="M0.9 1 L4.6 4.5 L0.9 8" fill="none" stroke="#3c3c3c" stroke-width="1.1"/></svg></div>
<div class="sep" style="top:290px"></div>
<div class="mi" style="top:293px;letter-spacing:-0.05px">Effect<svg width="6" height="9" viewBox="0 0 6 9"><path d="M0.9 1 L4.6 4.5 L0.9 8" fill="none" stroke="#3c3c3c" stroke-width="1.1"/></svg></div>
<div class="mi" style="top:315px;letter-spacing:-0.37px">Keyframe Assistant<svg width="6" height="9" viewBox="0 0 6 9"><path d="M0.9 1 L4.6 4.5 L0.9 8" fill="none" stroke="#3c3c3c" stroke-width="1.1"/></svg></div>
<div class="mi" style="top:337px;letter-spacing:-0.14px">Track &amp; Stabilize<svg width="6" height="9" viewBox="0 0 6 9"><path d="M0.9 1 L4.6 4.5 L0.9 8" fill="none" stroke="#3c3c3c" stroke-width="1.1"/></svg></div>
<div class="sep" style="top:363px"></div>
<div class="mi" style="top:366px;letter-spacing:0.22px">Open<svg width="6" height="9" viewBox="0 0 6 9"><path d="M0.9 1 L4.6 4.5 L0.9 8" fill="none" stroke="#3c3c3c" stroke-width="1.1"/></svg></div>
<div class="mi" style="top:388px;letter-spacing:-0.36px">Reveal<svg width="6" height="9" viewBox="0 0 6 9"><path d="M0.9 1 L4.6 4.5 L0.9 8" fill="none" stroke="#3c3c3c" stroke-width="1.1"/></svg></div>
<div class="mi" style="top:410px;letter-spacing:-0.32px">Create<svg width="6" height="9" viewBox="0 0 6 9"><path d="M0.9 1 L4.6 4.5 L0.9 8" fill="none" stroke="#3c3c3c" stroke-width="1.1"/></svg></div>
<div class="sep" style="top:436px"></div>
<div class="mi" style="top:439px;letter-spacing:-0.31px">Camera<svg width="6" height="9" viewBox="0 0 6 9"><path d="M0.9 1 L4.6 4.5 L0.9 8" fill="none" stroke="#3c3c3c" stroke-width="1.1"/></svg></div>
<div class="mi" style="top:461px;letter-spacing:-0.2px">Pre-compose...</div>
<div class="sep" style="top:487px"></div>
<div class="mi" style="top:490px;letter-spacing:-0.21px">Invert Selection</div>
<div class="mi" style="top:512px;letter-spacing:-0.24px">Select Children</div>
<div class="hlbg" style="top:535px"></div>
<div class="a" style="left:0px;top:533px;width:228px;height:28px;border:1px solid #e02525"></div>
<div class="mi hl" style="top:534px;letter-spacing:-0.31px">Rename</div>
<div class="mi dis" style="top:556px;letter-spacing:-0.27px">Add to Essential Graphics</div>
</div>
</body></html>
